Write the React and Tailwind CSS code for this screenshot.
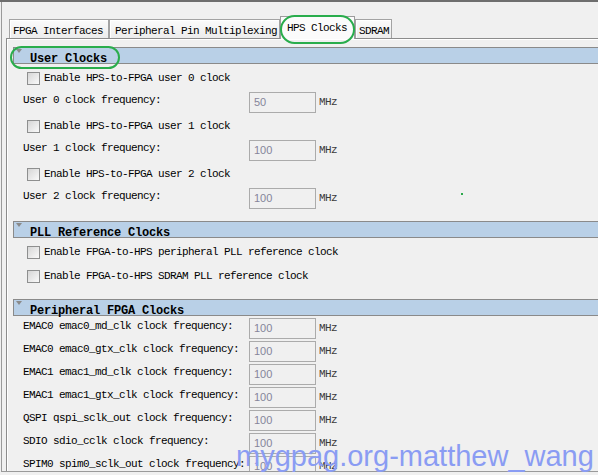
import React from "react";

function Checkbox() {
  return (
    <div className="w-[13px] h-[13px] shrink-0 border border-[#8e8f8f] bg-linear-to-br from-[#d6d6d6] to-[#fafafa]" />
  );
}

function CheckRow({ text }) {
  return (
    <div className="h-[24px] flex items-center pl-[14px]">
      <Checkbox />
      <span className="ml-[4px] whitespace-nowrap">{text}</span>
    </div>
  );
}

function InputRow({ label, value, tall }) {
  return (
    <div className={tall ? "h-[24px] flex items-center pl-[10px]" : "h-[23px] flex items-center pl-[10px]"}>
      <span className="w-[226px] shrink-0 pb-[4px] whitespace-nowrap">{label}</span>
      <div className="w-[67px] h-[21px] shrink-0 border border-[#ababab] bg-[#f0f0f0] flex items-center pl-[4px] font-['Liberation_Sans',Arial,sans-serif] text-[11px] tracking-normal text-[#85859a]">
        {value}
      </div>
      <span className="ml-[3px] text-[#3a3a3a]">MHz</span>
    </div>
  );
}

function Header({ title }) {
  return (
    <div className="h-[17px] -mr-[4px] border border-[#8a8a8a] bg-[#b9d0e7] flex items-start">
      <div className="ml-[2px] mt-[1px] w-0 h-0 border-l-[3px] border-r-[3px] border-t-[4px] border-l-transparent border-r-transparent border-t-[#8a8a8a]" />
      <div className="ml-[8px] pt-[5px] leading-[12px] text-[12px] font-bold tracking-[-0.2px] text-black whitespace-nowrap">
        {title}
      </div>
    </div>
  );
}

function Tab({ label, selected, w, pl }) {
  if (selected) {
    return (
      <div
        className={`${w} ${pl} relative z-10 h-[23px] -mb-[1px] border border-b-0 border-[#9c9c9c] bg-[#fbfbfb] pt-[5px] leading-[13px] whitespace-nowrap`}
      >
        {label}
      </div>
    );
  }
  return (
    <div
      className={`${w} ${pl} h-[19px] border border-b-0 border-[#a3a3a3] bg-linear-to-b from-[#fbfbfb] to-[#ececec] shadow-[inset_1px_1px_0_#ffffff] pt-[5px] leading-[13px] whitespace-nowrap`}
    >
      {label}
    </div>
  );
}

export default function App() {
  const periph = [
    "EMAC0 emac0_md_clk clock frequency:",
    "EMAC0 emac0_gtx_clk clock frequency:",
    "EMAC1 emac1_md_clk clock frequency:",
    "EMAC1 emac1_gtx_clk clock frequency:",
    "QSPI qspi_sclk_out clock frequency:",
    "SDIO sdio_cclk clock frequency:",
    "SPIM0 spim0_sclk_out clock frequency:",
  ];
  return (
    <div className="relative w-[598px] h-[475px] overflow-hidden bg-[#f0f0f0] font-['Liberation_Mono',monospace] text-[11px] tracking-[-0.6px] text-black">
      <div className="h-[2px] bg-[#6e6e6e]" />
      <div className="ml-[1px] h-[470px] border-l border-b border-[#9a9a9a] flex flex-col">
        <div className="h-[36px] shrink-0 flex items-end pl-[7px]">
          <Tab label="FPGA Interfaces" w="w-[100px]" pl="pl-[3px]" />
          <Tab label="Peripheral Pin Multiplexing" w="w-[171px]" pl="pl-[5px]" />
          <Tab label="HPS Clocks" selected w="w-[75px]" pl="pl-[6px]" />
          <Tab label="SDRAM" w="w-[37px]" pl="pl-[3px]" />
        </div>
        <div className="ml-[4px] flex-1 overflow-hidden border-l border-t border-[#8c8c8c] shadow-[inset_1px_1px_0_#ffffff] pl-[6px] pt-[8px]">
          <div className="mb-[11px]">
            <Header title="User Clocks" />
            <div className="pt-[2px]">
              <CheckRow text="Enable HPS-to-FPGA user 0 clock" />
              <InputRow tall label="User 0 clock frequency:" value="50" />
              <CheckRow text="Enable HPS-to-FPGA user 1 clock" />
              <InputRow tall label="User 1 clock frequency:" value="100" />
              <CheckRow text="Enable HPS-to-FPGA user 2 clock" />
              <InputRow tall label="User 2 clock frequency:" value="100" />
            </div>
          </div>
          <div className="mb-[11px]">
            <Header title="PLL Reference Clocks" />
            <div className="pt-[2px]">
              <CheckRow text="Enable FPGA-to-HPS peripheral PLL reference clock" />
              <CheckRow text="Enable FPGA-to-HPS SDRAM PLL reference clock" />
            </div>
          </div>
          <div>
            <Header title="Peripheral FPGA Clocks" />
            <div className="pt-[1px]">
              {periph.map((l) => (
                <InputRow key={l} label={l} value="100" />
              ))}
            </div>
          </div>
        </div>
      </div>

      {/* annotations */}
      <div className="absolute left-[280px] top-[15px] w-[75px] h-[29px] rounded-[15px] border-2 border-[#29ad4c] z-20" />
      <div className="absolute left-[10px] top-[46px] w-[110px] h-[23px] rounded-[12px] border-2 border-[#29ad4c] z-20" />
      <div className="absolute left-[461px] top-[193px] w-[2px] h-[2px] bg-[#2aa84a]" />
      <div className="absolute left-[236px] top-[442px] z-30 whitespace-nowrap font-['Liberation_Sans',Arial,sans-serif] text-[29px] leading-none tracking-normal text-[#8a9cf3]">
        mygpag.org-matthew_wang
      </div>
    </div>
  );
}
